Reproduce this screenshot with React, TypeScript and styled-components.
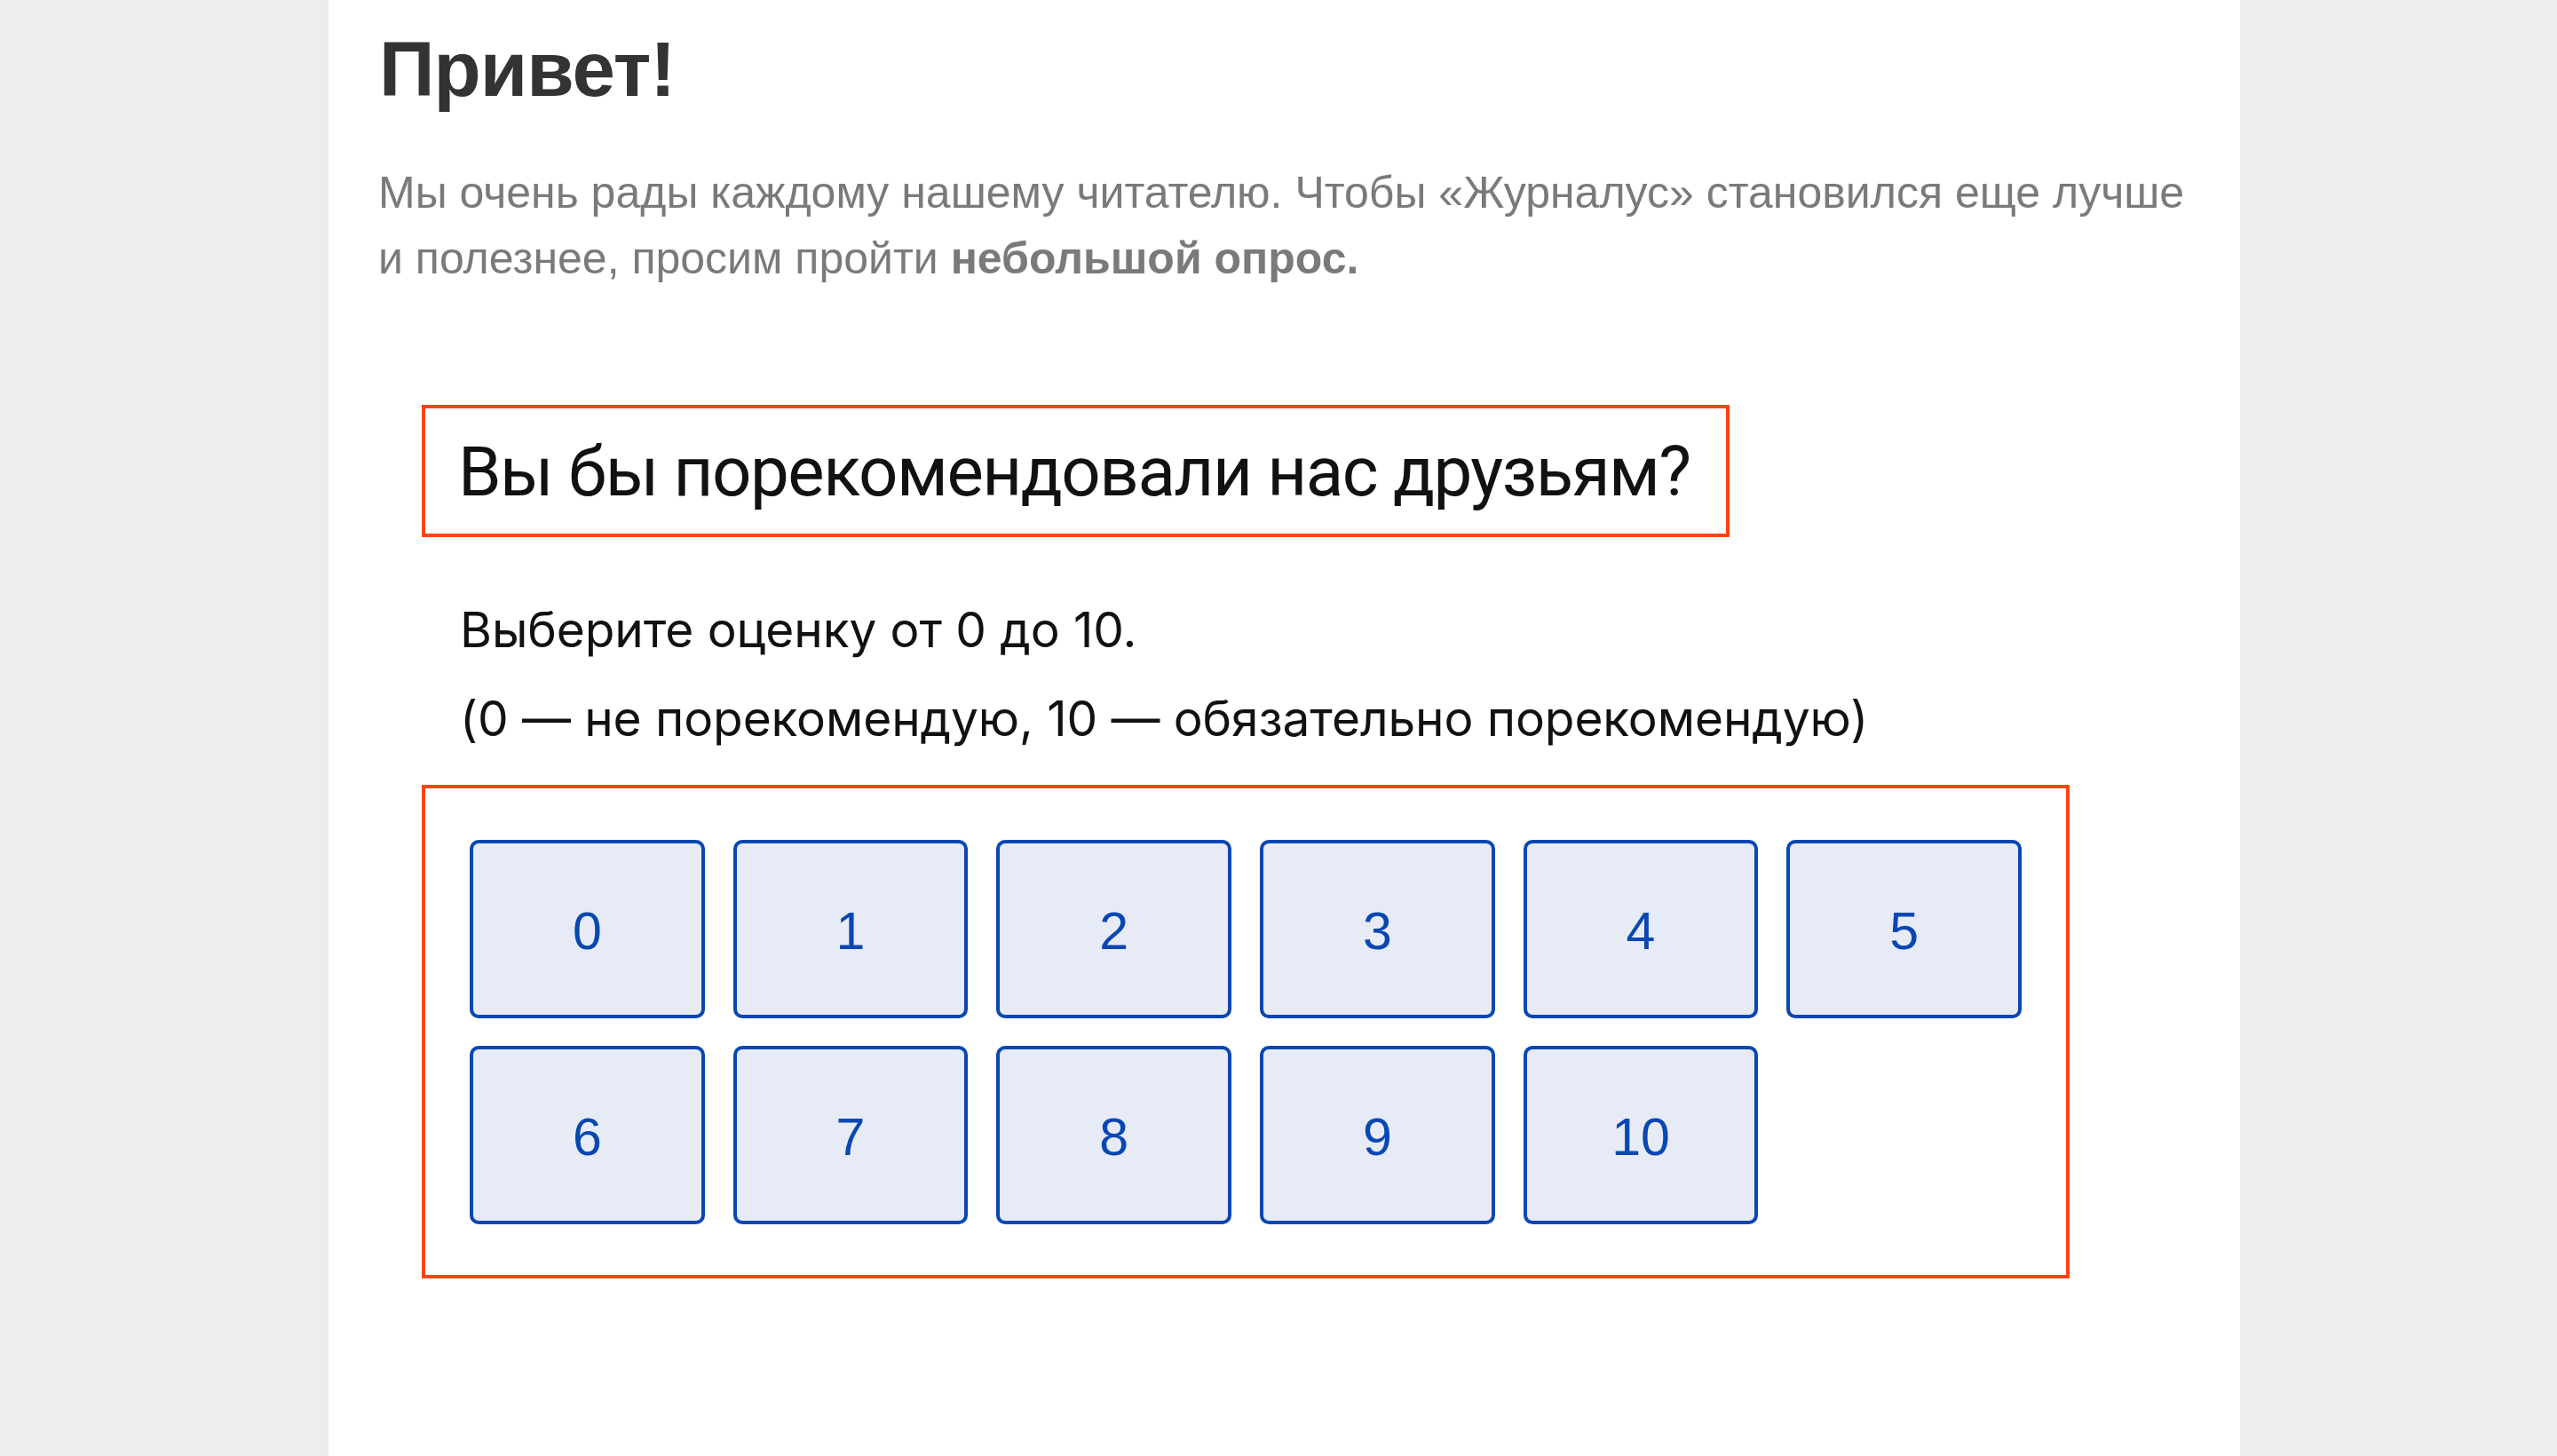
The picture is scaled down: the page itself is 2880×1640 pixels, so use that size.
import React from 'react';
import styled, { createGlobalStyle } from 'styled-components';

const GlobalStyle = createGlobalStyle`
  html, body {
    margin: 0;
    padding: 0;
    background: #ededed;
  }
  body {
    font-family: "Liberation Sans", Arial, sans-serif;
  }
`;

const Page = styled.div`
  min-height: 1640px;
  display: flex;
`;

const Panel = styled.main`
  width: 2153px;
  margin-left: 370px;
  background: #ffffff;
  padding: 34px 0 0 57px;
  box-sizing: border-box;
`;

const Title = styled.h1`
  margin: 0;
  font-size: 87px;
  line-height: 88px;
  font-weight: 700;
  color: #333333;
  letter-spacing: -1px;
`;

const Intro = styled.p`
  margin: 58px 0 0 -1px;
  font-size: 50px;
  line-height: 74px;
  color: #7a7a7a;
  max-width: 2070px;

  b {
    font-weight: 700;
  }
`;

const Survey = styled.section`
  margin: 128px 0 0 48px;
  font-family: Inter, "Liberation Sans", sans-serif;
  color: #111111;
`;

const Question = styled.h2`
  display: inline-block;
  margin: 0;
  padding: 24px 40px 21px 37px;
  border: 4px solid #fb4414;
  font-family: Roboto, "Liberation Sans", sans-serif;
  font-size: 78px;
  line-height: 96px;
  font-weight: 400;
  letter-spacing: -1.5px;
`;

const Hint = styled.p<{ $top: number }>`
  margin: ${p => p.$top}px 0 0 43px;
  font-size: 55px;
  line-height: 64px;
  letter-spacing: -0.1px;
`;

const Scale = styled.div`
  margin-top: 43px;
  width: 1856px;
  box-sizing: border-box;
  border: 4px solid #fb4414;
  padding: 58px 50px 57px 50px;
  display: grid;
  grid-template-columns: repeat(6, 1fr);
  gap: 31px 32px;
`;

const ScoreButton = styled.button`
  height: 201px;
  border: 4px solid #0947b2;
  border-radius: 10px;
  background: #e7ebf6;
  color: #0947b2;
  font-family: "Liberation Sans", Arial, sans-serif;
  font-size: 59px;
  padding: 5px 0 0;
  cursor: pointer;
`;

const scores = Array.from({ length: 11 }, (_, i) => i);

export default function App() {
  return (
    <>
      <GlobalStyle />
      <Page>
        <Panel>
          <Title>Привет!</Title>
          <Intro>
            Мы очень рады каждому нашему читателю. Чтобы «Журналус» становился еще лучше
            и полезнее, просим пройти <b>небольшой опрос.</b>
          </Intro>
          <Survey>
            <Question>Вы бы порекомендовали нас друзьям?</Question>
            <Hint $top={72}>Выберите оценку от 0 до 10.</Hint>
            <Hint $top={36}>(0 — не порекомендую, 10 — обязательно порекомендую)</Hint>
            <Scale>
              {scores.map(n => (
                <ScoreButton key={n}>{n}</ScoreButton>
              ))}
            </Scale>
          </Survey>
        </Panel>
      </Page>
    </>
  );
}
